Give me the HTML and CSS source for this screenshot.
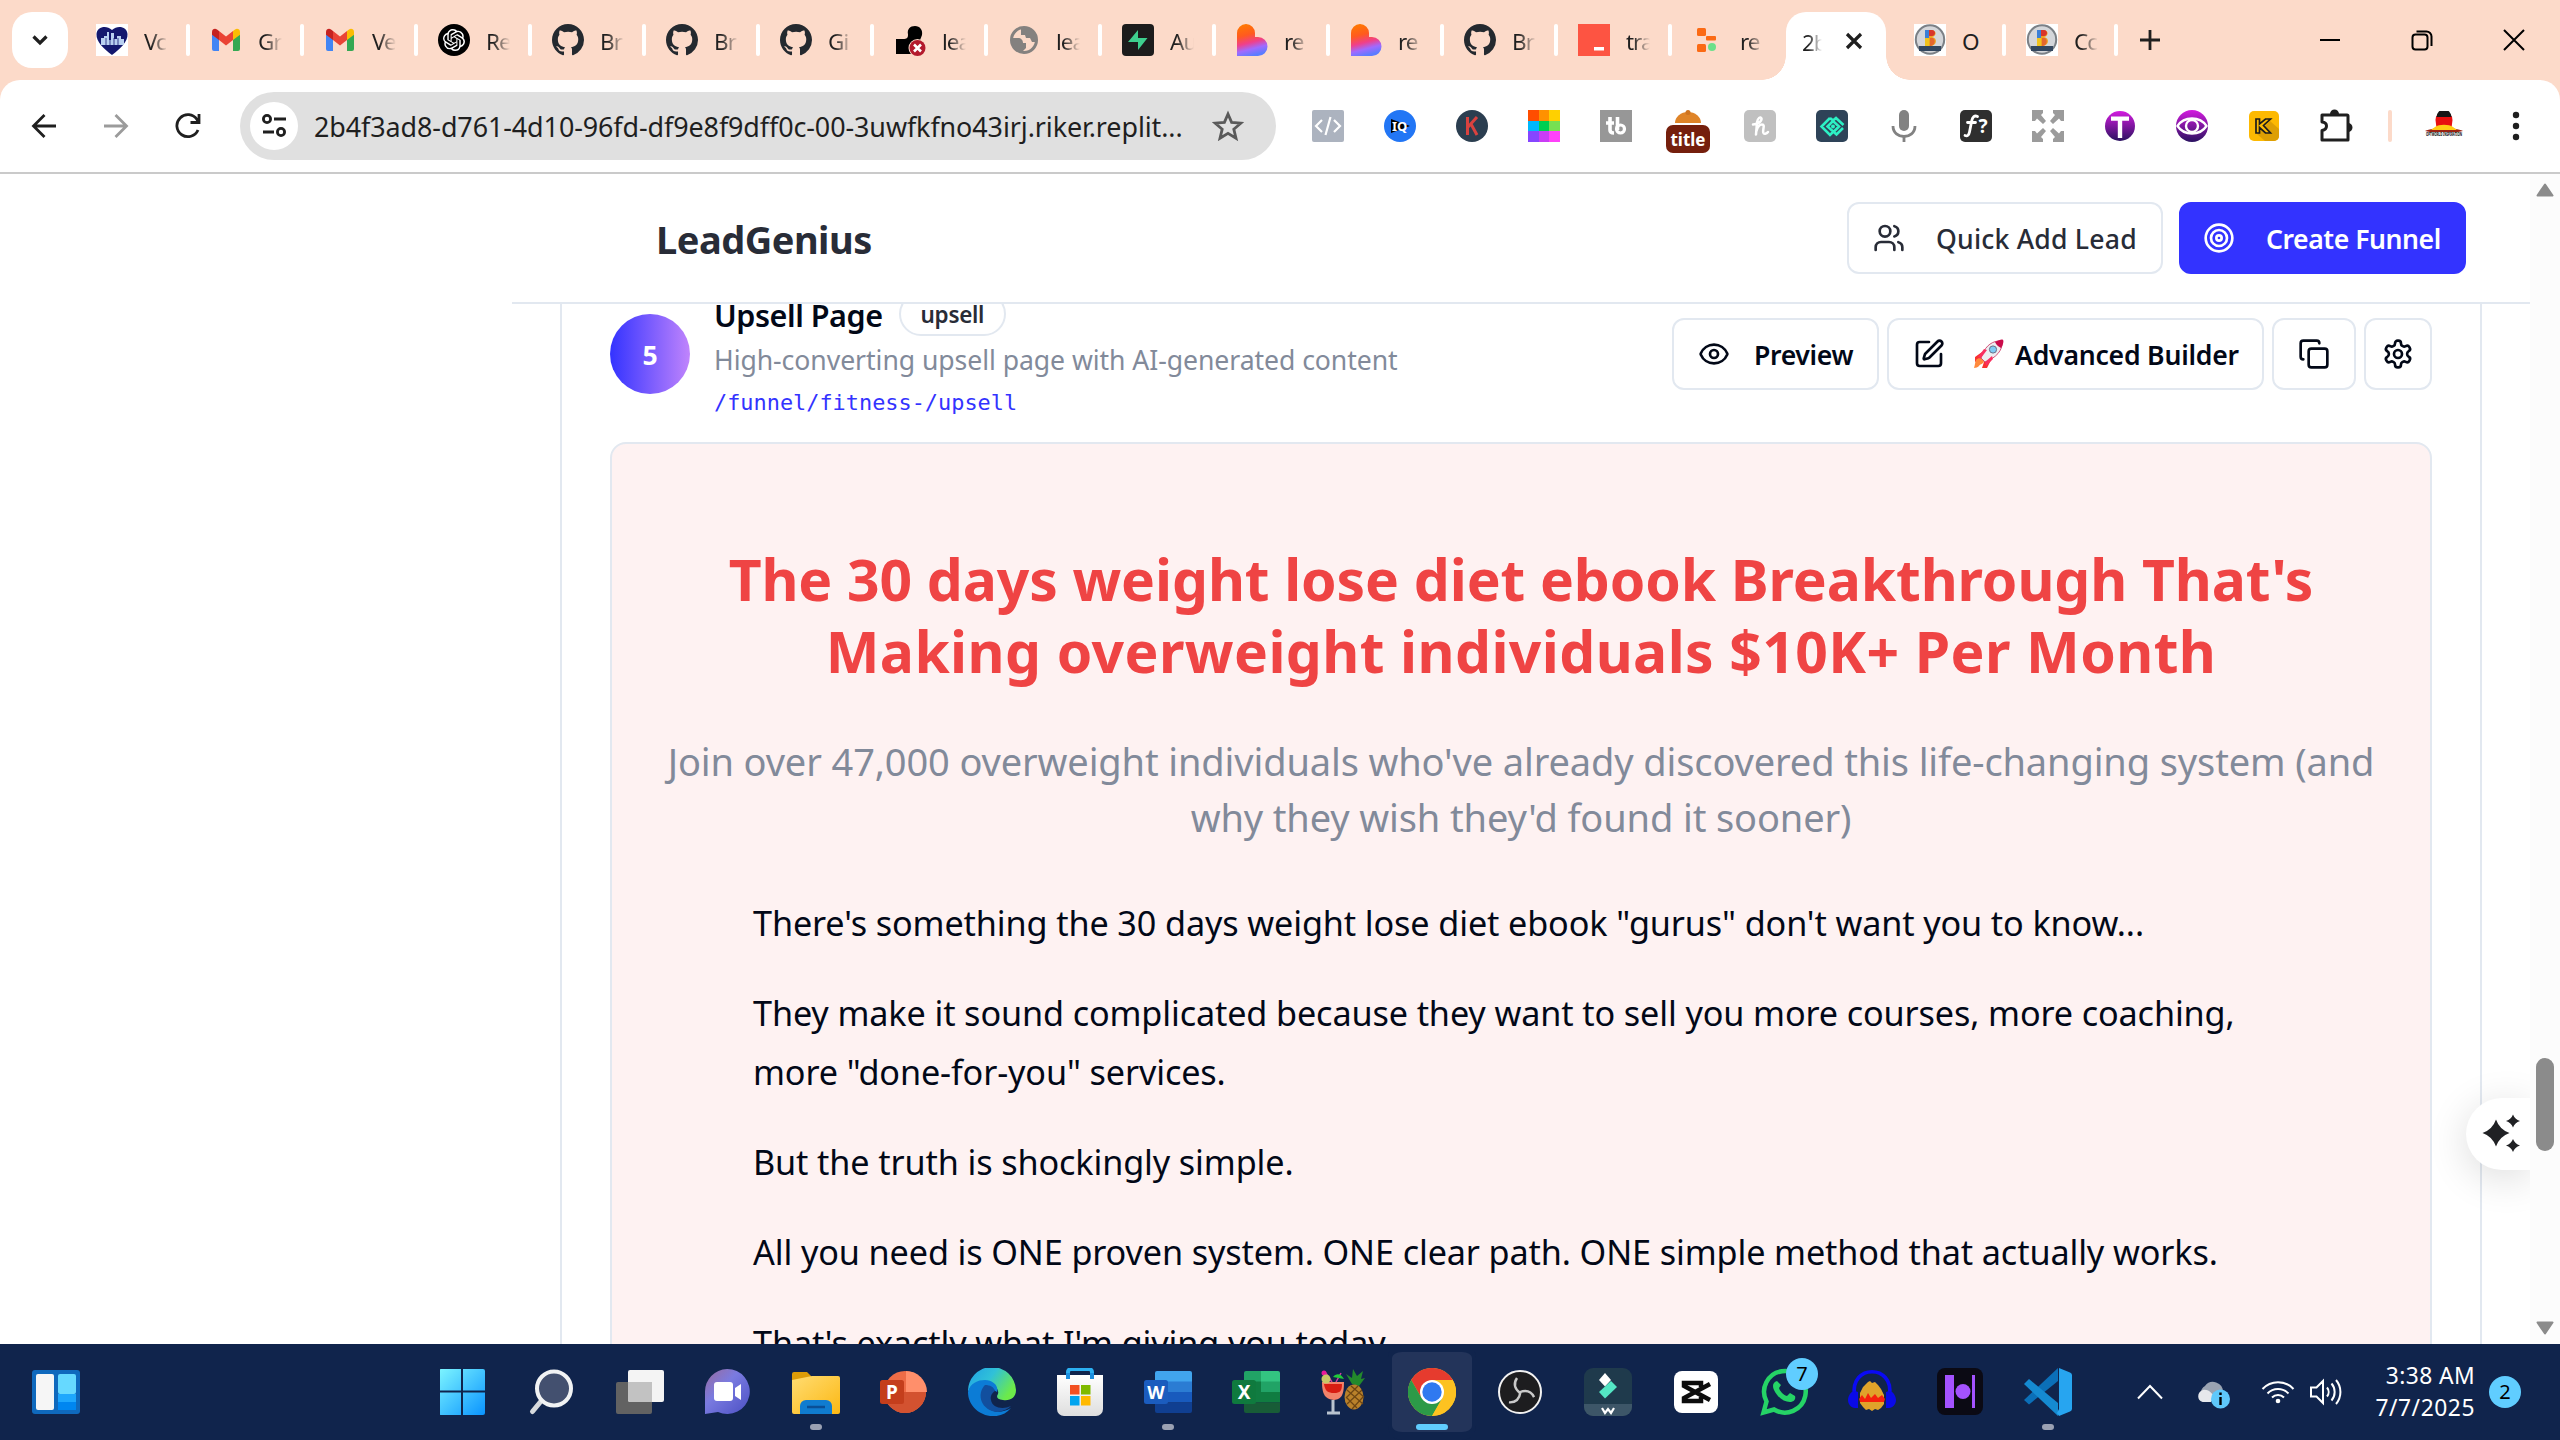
FILE: index.html
```html
<!DOCTYPE html>
<html lang="en">
<head>
<meta charset="utf-8">
<title>LeadGenius</title>
<link rel="stylesheet" href="styles.css">
</head>
<body>
<svg class="defs" aria-hidden="true">
  <defs>
    <linearGradient id="g-blob" x1="0.2" y1="0" x2="0.45" y2="1"><stop offset="0" stop-color="#ff7a00"/><stop offset=".35" stop-color="#ff5a1f"/><stop offset=".6" stop-color="#f0408a"/><stop offset=".8" stop-color="#a06aff"/><stop offset="1" stop-color="#5b7cff"/></linearGradient>
    <linearGradient id="g-purple" x1="0" y1="0" x2="0" y2="1"><stop offset="0" stop-color="#d41be0"/><stop offset="1" stop-color="#2a1260"/></linearGradient>
    <linearGradient id="g-win" x1="0" y1="0" x2="1" y2="1"><stop offset="0" stop-color="#7df5ff"/><stop offset="1" stop-color="#0a94ff"/></linearGradient>
    <linearGradient id="g-chat" x1="0" y1="0" x2="1" y2="1"><stop offset="0" stop-color="#9a6a9c"/><stop offset=".4" stop-color="#7a7be0"/><stop offset="1" stop-color="#4b4fc4"/></linearGradient>
    <linearGradient id="g-folder" x1="0" y1="0" x2="1" y2="1"><stop offset="0" stop-color="#ffdc72"/><stop offset="1" stop-color="#fcb813"/></linearGradient>
    <linearGradient id="g-edge" x1="0" y1="0" x2="1" y2=".5"><stop offset="0" stop-color="#1fa0e6"/><stop offset=".5" stop-color="#30c1d8"/><stop offset="1" stop-color="#6cea4a"/></linearGradient>
    <linearGradient id="g-bag" x1="0" y1="0" x2="0" y2="1"><stop offset="0" stop-color="#fff"/><stop offset="1" stop-color="#dedede"/></linearGradient>
    <symbol id="github" viewBox="0 0 16 16"><path fill="#24292f" d="M8 0C3.58 0 0 3.58 0 8c0 3.54 2.29 6.53 5.47 7.59.4.07.55-.17.55-.38 0-.19-.01-.82-.01-1.49-2.01.37-2.53-.49-2.69-.94-.09-.23-.48-.94-.82-1.13-.28-.15-.68-.52-.01-.53.63-.01 1.08.58 1.23.82.72 1.21 1.87.87 2.33.66.07-.52.28-.87.51-1.07-1.78-.2-3.64-.89-3.64-3.95 0-.87.31-1.59.82-2.15-.08-.2-.36-1.02.08-2.12 0 0 .67-.21 2.2.82.64-.18 1.32-.27 2-.27s1.36.09 2 .27c1.53-1.04 2.2-.82 2.2-.82.44 1.1.16 1.92.08 2.12.51.56.82 1.27.82 2.15 0 3.07-1.87 3.75-3.65 3.95.29.25.54.73.54 1.48 0 1.07-.01 1.93-.01 2.2 0 .21.15.46.55.38A8.01 8.01 0 0 0 16 8c0-4.42-3.58-8-8-8z"/></symbol>
    <symbol id="gmail" viewBox="0 0 32 32"><path fill="#4285f4" d="M2 10l7 5v12H4a2 2 0 0 1-2-2z"/><path fill="#34a853" d="M30 10l-7 5v12h5a2 2 0 0 0 2-2z"/><path fill="#ea4335" d="M9 7l7 5.5L23 7v9l-7 5.500L9 16z"/><path fill="#c5221f" d="M2 8c0-3 3-4 5-2.500l2 1.500v9l-7-5.200z"/><path fill="#fbbc04" d="M30 8c0-3-3-4-5-2.500L23 7v9l7-5.200z"/></symbol>
    <symbol id="blob" viewBox="0 0 32 32"><path fill="url(#g-blob)" d="M1 32V9a9 9 0 0 1 18 0v4h3a9.500 9.500 0 0 1 0 19z"/></symbol>
    <symbol id="badge" viewBox="0 0 32 32"><path fill="#fff" d="M0 0h32v32H0z"/><circle cx="16" cy="15.500" r="14.200" fill="#d4d6da" stroke="#7b8086" stroke-width="2"/><path d="M11 6h6c6 0 6 6 1 7 6 1 5 9-2 9h-5z" fill="#f0a11e"/><path d="M11 6h4v8h-4z" fill="#3b7fd6"/><path d="M15 6h3c4 0 4 6 0 6h-3z" fill="#d8352a"/><path d="M11 14h4v8h-4z" fill="#f0c31e"/><path d="M16 14h3c3 2 2 8-3 8z" fill="#e4672e"/><path fill="#33475f" d="M5 22h22v5H5z"/></symbol>
    <symbol id="heart" viewBox="0 0 32 32"><path fill="#fff" d="M0 0h32v32H0z"/><path fill="#14186e" d="M16 31C8 25 0 18 .500 10 1 3 10 .500 16 6c6-5.500 15-3 15.500 4C32 18 24 25 16 31z"/><path fill="#b9d0f0" d="M5 21V14h3v-2h3V8h2v8h2V9h3v6h3v-3h4v3h3v6z"/><path d="M10 14v7M14 14v7M18 14v7M22 14v7" stroke="#14186e" stroke-width=".800"/></symbol>
  </defs>
</svg>

<div class="tabstrip">
  <div class="tab-search"><svg width="20" height="20" viewBox="0 0 20 20"><path d="M3.500 6.500L10 13l6.500-6.500" fill="none" stroke="#1f1f1f" stroke-width="3.200"/></svg></div>
  <div class="tabs">
    <div class="tab"><svg class="fav"><use href="#heart"/></svg><span class="tab-text">Vc</span></div>
    <div class="tab"><svg class="fav"><use href="#gmail"/></svg><span class="tab-text">Gr</span></div>
    <div class="tab"><svg class="fav"><use href="#gmail"/></svg><span class="tab-text">Ve</span></div>
    <div class="tab"><svg class="fav" viewBox="0 0 32 32"><circle cx="16" cy="16" r="16"/><path fill="#fff" transform="translate(5 5) scale(.917)" d="M22.2819 9.8211a5.9847 5.9847 0 0 0-.5157-4.9108 6.0462 6.0462 0 0 0-6.5098-2.9A6.0651 6.0651 0 0 0 4.9807 4.1818a5.9847 5.9847 0 0 0-3.9977 2.9 6.0462 6.0462 0 0 0 .7427 7.0966 5.98 5.98 0 0 0 .511 4.9107 6.051 6.051 0 0 0 6.5146 2.9001A5.9847 5.9847 0 0 0 13.2599 24a6.0557 6.0557 0 0 0 5.7718-4.2058 5.9894 5.9894 0 0 0 3.9977-2.9001 6.0557 6.0557 0 0 0-.7475-7.0729zm-9.022 12.6081a4.4755 4.4755 0 0 1-2.8764-1.0408l.1419-.0804 4.7783-2.7582a.7948.7948 0 0 0 .3927-.6813v-6.7369l2.02 1.1686a.071.071 0 0 1 .038.052v5.5826a4.504 4.504 0 0 1-4.4945 4.4944zm-9.6607-4.1254a4.4708 4.4708 0 0 1-.5346-3.0137l.142.0852 4.783 2.7582a.7712.7712 0 0 0 .7806 0l5.8428-3.3685v2.3324a.0804.0804 0 0 1-.0332.0615L9.74 19.9502a4.4992 4.4992 0 0 1-6.1408-1.6464zM2.3408 7.8956a4.485 4.485 0 0 1 2.3655-1.9728V11.6a.7664.7664 0 0 0 .3879.6765l5.8144 3.3543-2.0201 1.1685a.0757.0757 0 0 1-.071 0l-4.8303-2.7865A4.504 4.504 0 0 1 2.3408 7.872zm16.5963 3.8558L13.1038 8.364 15.1192 7.2a.0757.0757 0 0 1 .071 0l4.8303 2.7913a4.4944 4.4944 0 0 1-.6765 8.1042v-5.6772a.79.79 0 0 0-.407-.667zm2.0107-3.0231l-.142-.0852-4.7735-2.7818a.7759.7759 0 0 0-.7854 0L9.409 9.2297V6.8974a.0662.0662 0 0 1 .0284-.0615l4.8303-2.7866a4.4992 4.4992 0 0 1 6.6802 4.66zM8.3065 12.863l-2.02-1.1638a.0804.0804 0 0 1-.038-.0567V6.0742a4.4992 4.4992 0 0 1 7.3757-3.4537l-.142.0805L8.704 5.459a.7948.7948 0 0 0-.3927.6813zm1.0976-2.3654l2.602-1.4998 2.6069 1.4998v2.9994l-2.5974 1.4997-2.6067-1.4997Z"/></svg><span class="tab-text">Re</span></div>
    <div class="tab"><svg class="fav"><use href="#github"/></svg><span class="tab-text">Br</span></div>
    <div class="tab"><svg class="fav"><use href="#github"/></svg><span class="tab-text">Br</span></div>
    <div class="tab"><svg class="fav"><use href="#github"/></svg><span class="tab-text">Gi</span></div>
    <div class="tab"><svg class="fav" viewBox="0 0 32 32"><path d="M2 30V15h7c4 0 5-1 5-4.500C13 5 16 2 21 2s8 4 7 9c-1 3-2 4-2 7v12z"/><circle cx="23.500" cy="24" r="9" fill="#fcdac9"/><circle cx="23.500" cy="24" r="8" fill="#b3192c"/><path d="M20 20.500l7 7m0-7l-7 7" stroke="#fff" stroke-width="2.600"/></svg><span class="tab-text">lea</span></div>
    <div class="tab"><svg class="fav" viewBox="0 0 32 32"><circle cx="16" cy="16" r="12.500" fill="none" stroke="#84817f" stroke-width="3"/><path fill="#84817f" d="M4 14h6c3 0 5 2 5 5h3v5l-4 4c-6 0-10-6-10-14zM13 4h8l6 5v9h-3l-2-4h-4l-1-3h-4V7z"/></svg><span class="tab-text">lea</span></div>
    <div class="tab"><svg class="fav" viewBox="0 0 32 32"><rect width="32" height="32" rx="4" fill="#1c1c1c"/><path fill="#3ecf8e" d="M16 6v8h9.500L16 26v-8H6z"/></svg><span class="tab-text">Au</span></div>
    <div class="tab"><svg class="fav"><use href="#blob"/></svg><span class="tab-text">re</span></div>
    <div class="tab"><svg class="fav"><use href="#blob"/></svg><span class="tab-text">re</span></div>
    <div class="tab"><svg class="fav"><use href="#github"/></svg><span class="tab-text">Br</span></div>
    <div class="tab"><svg class="fav" viewBox="0 0 32 32"><path fill="#fd5442" d="M0 0h32v32H0z"/><path fill="#fff" d="M16 23h10v3.500H16z"/></svg><span class="tab-text">tra</span></div>
    <div class="tab last"><svg class="fav" viewBox="0 0 32 32"><g fill="#fb6a14"><rect x="5" y="4" width="9" height="8" rx="1.500"/><rect x="14" y="12" width="10" height="4.500" rx="1"/><rect x="5" y="20" width="9" height="8" rx="1.500"/></g><circle cx="20" cy="23" r="4" fill="#6be08a"/></svg><span class="tab-text">re</span></div>
    <div class="tab active"><span class="tab-text">2b</span><svg class="close" width="18" height="18" viewBox="0 0 18 18"><path d="M2 2l14 14M16 2L2 16" stroke="#1f1f1f" stroke-width="3.200"/></svg></div>
    <div class="tab after"><svg class="fav"><use href="#badge"/></svg><span class="tab-text">O</span></div>
    <div class="tab end"><svg class="fav"><use href="#badge"/></svg><span class="tab-text">Cc</span></div>
  </div>
  <svg class="plus" width="20" height="20" viewBox="0 0 20 20"><path d="M10 0v20M0 10h20" stroke="#1f1f1f" stroke-width="2.800"/></svg>
  <div class="win-controls">
    <svg width="24" height="24" viewBox="0 0 24 24"><path d="M2 12h20" stroke="#000" stroke-width="2"/></svg>
    <svg width="24" height="24" viewBox="0 0 24 24" fill="none" stroke="#000" stroke-width="2"><rect x="2.500" y="6.500" width="15" height="15" rx="3"/><path d="M6.500 3.500h10a5 5 0 0 1 5 5V18"/></svg>
    <svg width="24" height="24" viewBox="0 0 24 24"><path d="M2 2l20 20M22 2L2 22" stroke="#000" stroke-width="2"/></svg>
  </div>
</div>

<div class="toolbar">
  <div class="cell"><svg width="26" height="26" viewBox="0 0 26 26" fill="none" stroke="#1f1f1f" stroke-width="2.800"><path d="M25 13H3M13.500 2L2.500 13l11 11"/></svg></div>
  <div class="cell"><svg width="26" height="26" viewBox="0 0 26 26" fill="none" stroke="#9b9b9b" stroke-width="2.800"><path d="M1 13h22M12.500 2l11 11-11 11"/></svg></div>
  <div class="cell"><svg width="26" height="26" viewBox="0 0 26 26" fill="none" stroke="#1f1f1f" stroke-width="2.800"><path d="M23 17A11 11 0 1 1 22 6.500l1.500 2.500M24 1v8.500h-8.500"/></svg></div>
  <div class="address">
    <div class="site"><svg width="26" height="26" viewBox="0 0 26 26" fill="none" stroke="#1f1f1f" stroke-width="2.800"><circle cx="6" cy="6" r="3.600"/><path d="M13 6h12M2 19h11"/><circle cx="20" cy="19" r="3.600"/></svg></div>
    <span class="url">2b4f3ad8-d761-4d10-96fd-df9e8f9dff0c-00-3uwfkfno43irj.riker.replit...</span>
    <svg class="star" width="32" height="32" viewBox="0 0 32 32"><path d="M16 4l3.600 8.400 9.200.8-7 6 2.200 9L16 23.400 8 28.200l2.200-9-7-6 9.200-.8z" fill="none" stroke="#5a5a5a" stroke-width="2.800"/></svg>
  </div>
  <div class="exts">
    <div class="cell"><svg width="32" height="32" viewBox="0 0 32 32"><rect width="32" height="32" rx="2" fill="#acb3bf"/><path d="M10 10l-6 6 6 6M22 10l6 6-6 6M18.500 7l-5 18" fill="none" stroke="#fff" stroke-width="2.200"/></svg></div>
    <div class="cell"><svg width="32" height="32" viewBox="0 0 32 32"><circle cx="16" cy="16" r="16" fill="#2276f5"/><path d="M7 9l19 7-19 7z"/><text x="8" y="21" font-size="13" class="ico-text" fill="#fff">IQ</text></svg></div>
    <div class="cell"><svg width="32" height="32" viewBox="0 0 32 32"><circle cx="16" cy="16" r="16" fill="#2b3e50"/><path d="M11.500 7v18M21 7l-9 10M15 14l6 11" fill="none" stroke="#d9423f" stroke-width="3"/></svg></div>
    <div class="cell"><div class="swatches"><i></i><i></i><i></i><i></i><i></i><i></i><i></i><i></i><i></i></div></div>
    <div class="cell"><svg width="32" height="32" viewBox="0 0 32 32"><path fill="#979797" d="M0 0h32v32H0z"/><path d="M10 7v13q0 3 4 3M6 13h8M17.500 7v13" fill="none" stroke="#fff" stroke-width="3.600"/><circle cx="20.500" cy="19" r="4" fill="none" stroke="#fff" stroke-width="3.200"/></svg></div>
    <div class="cell title-ext"><svg width="44" height="44" viewBox="0 0 44 44"><path d="M9 13a13 11 0 0 1 26 0z" fill="#df8428"/><circle cx="22" cy="2.500" r="2.500" fill="#cf7420"/><rect y="15" width="44" height="28" rx="7" fill="#751f0d"/><text x="22" y="35.500" text-anchor="middle" font-size="17" textLength="35" lengthAdjust="spacingAndGlyphs" class="ico-text" fill="#fff">title</text></svg></div>
    <div class="cell"><svg width="32" height="32" viewBox="0 0 32 32"><rect width="32" height="32" rx="5" fill="#c0c0c0"/><path d="M9 14.500c4 0 9-3 8.500-6-.800-2.500-4-.500-4.500 4l-1 12M12.500 21c1-4 3-6.500 5.500-6.500 3.500 0 .500 5 1.200 8 .6 2 3.300 1.500 4.800-.5" fill="none" stroke="#fff" stroke-width="2.500" stroke-linecap="round"/></svg></div>
    <div class="cell"><svg width="32" height="32" viewBox="0 0 32 32"><rect width="32" height="32" rx="5" fill="#2e4358"/><path d="M14 8l-8.500 8.500L14 25l3-3M14 8l3 2.500 3-2.500 7.500 7M27 18l-6.500 6.500-9-8 5.500-5.500 6 5.500-5.500 5.500" fill="none" stroke="#2df0c4" stroke-width="2.600"/><circle cx="17" cy="16.500" r="2" fill="#2df0c4"/></svg></div>
    <div class="cell"><svg width="26" height="32" viewBox="0 0 26 32"><rect x="8" width="10" height="21" rx="5" fill="#828282"/><path d="M2 16c0 14 22 14 22 0M13 26v6" fill="none" stroke="#828282" stroke-width="2.800"/></svg></div>
    <div class="cell"><svg width="32" height="32" viewBox="0 0 32 32"><rect width="32" height="32" rx="5" fill="#2f2f2f"/><path d="M17.500 6.500c-3-1.500-5 .500-5.700 4L9.500 22c-.600 3-2 4.500-4.500 3.500M7.500 12.500h8" fill="none" stroke="#fff" stroke-width="2.800" stroke-linecap="round"/><text x="18.500" y="23" font-size="19" class="ico-text" fill="#fff">?</text></svg></div>
    <div class="cell"><svg width="32" height="32" viewBox="0 0 32 32" fill="#9b9b9b"><path d="M0 0h11v3L9 5l5 6-3 3-6-5.500L3 11H0zM32 0H21v3l2 2-5 6 3 3 6-5.500 2 2.500h3zM0 32h11v-3l-2-2 5-6-3-3-6 5.500L3 21H0zM32 32H21v-3l2-2-5-6 3-3 6 5.500 2-2.500h3z"/></svg></div>
    <div class="cell"><svg width="30" height="30" viewBox="0 0 30 30"><circle cx="15" cy="15" r="15" fill="url(#g-purple)"/><path d="M6 5.500h18v4.200h-6.800V27h-4.400V9.700H6z" fill="#fff"/></svg></div>
    <div class="cell"><svg width="32" height="32" viewBox="0 0 32 32"><circle cx="16" cy="16" r="16" fill="url(#g-purple)"/><path d="M1.500 16C8 6 24 6 30.500 16 24 26 8 26 1.500 16z" fill="none" stroke="#fff" stroke-width="2.300"/><circle cx="16" cy="16" r="6" fill="none" stroke="#fff" stroke-width="2.400"/></svg></div>
    <div class="cell"><svg width="30" height="30" viewBox="0 0 30 30"><rect width="30" height="30" rx="5" fill="#fdb902"/><path d="M21 10l9 8v7a5 5 0 0 1-5 5h-9l-8-7z" fill="#dd9f04"/><path d="M7 8h3.500v5l6-5h5l-7 6.500 7 7.500h-5l-6-5.500V22H7z" fill="#fdb902" stroke="#1c1c1c" stroke-width="1.700"/></svg></div>
    <div class="cell"><svg width="34" height="34" viewBox="0 0 34 34"><path d="M3 6h25a1 1 0 0 1 1 1v24H3v-9.500c6-1 6-8 0-8.500z" fill="none" stroke="#1f1f1f" stroke-width="3" stroke-linejoin="round"/><path d="M11 5a4.500 4.500 0 0 1 9 0zM29 14a4.500 4.500 0 0 1 0 9z" fill="#1f1f1f"/></svg></div>
  </div>
  <span class="tool-sep"></span>
  <div class="cell avatar"><svg width="40" height="30" viewBox="0 0 40 30"><path d="M12 9a8 8 0 0 1 16 0z" fill="#161616"/><path d="M11.500 9a8.500 8.500 0 0 1 17 0l-1 8h-15z" fill="#e80f0f"/><path d="M12.500 6a7.500 7.500 0 0 1 15 0z" fill="#161616"/><path d="M1 20c8-4 30-4 38 0l-5 1H6z" fill="#9c2212"/><path d="M11 16c4-3 14-3 18 0l4 3H7z" fill="#ffcc14"/><text x="20" y="25" text-anchor="middle" font-size="5" textLength="36" lengthAdjust="spacingAndGlyphs" class="ico-text">OPTWORLD INSPIRATION</text></svg></div>
  <div class="cell"><svg width="8" height="30" viewBox="0 0 8 30" fill="#1f1f1f"><circle cx="4" cy="4" r="3.200"/><circle cx="4" cy="15" r="3.200"/><circle cx="4" cy="26" r="3.200"/></svg></div>
</div>

<div class="viewport">
  <aside class="sidebar"></aside>
  <div class="page">
    <header class="app-header">
      <span class="brand">LeadGenius</span>
      <div class="header-actions">
        <div class="btn quick"><svg class="ic" viewBox="0 0 24 24"><path d="M16 21v-2a4 4 0 0 0-4-4H6a4 4 0 0 0-4 4v2"/><circle cx="9" cy="7" r="4"/><path d="M22 21v-2a4 4 0 0 0-3-3.870M16 3.130a4 4 0 0 1 0 7.750"/></svg><span class="label">Quick Add Lead</span></div>
        <div class="btn create"><svg class="ic" viewBox="0 0 24 24"><circle cx="12" cy="12" r="10"/><circle cx="12" cy="12" r="6"/><circle cx="12" cy="12" r="2"/></svg><span class="label">Create Funnel</span></div>
      </div>
    </header>
    <main class="content">
      <section class="card">
        <div class="step">
          <div class="num"><span class="label">5</span></div>
          <div class="info">
            <div class="title-row"><span class="step-title">Upsell Page</span><span class="pill">upsell</span></div>
            <div class="desc">High-converting upsell page with AI-generated content</div>
            <div class="path">/funnel/fitness-/upsell</div>
          </div>
          <div class="actions">
            <div class="btn preview"><svg class="ic" viewBox="0 0 24 24"><path d="M2.060 12.350a1 1 0 0 1 0-.700 10.750 10.750 0 0 1 19.880 0 1 1 0 0 1 0 .700 10.750 10.750 0 0 1-19.880 0"/><circle cx="12" cy="12" r="3"/></svg><span class="label">Preview</span></div>
            <div class="btn advanced"><svg class="ic" viewBox="0 0 24 24"><path d="M12 3H5a2 2 0 0 0-2 2v14a2 2 0 0 0 2 2h14a2 2 0 0 0 2-2v-7"/><path d="M18.380 2.620a1 1 0 0 1 3 3l-9.010 9.010a2 2 0 0 1-.850.510l-2.870.840a.500.500 0 0 1-.620-.620l.840-2.870a2 2 0 0 1 .510-.850z"/></svg>
              <svg class="rocket" width="30" height="30" viewBox="0 0 30 30"><path d="M8 13L1 18v5l6-3zM17 21l-4 8h-5l2-6z" fill="#f8312f"/><path d="M2 21c2-3 7-2 8 1 0 3-4 3-5 5-1 1-3 2-5 2 1-3 1-6 2-8z" fill="#ff8a3d"/><path d="M7 19C10 9 16 3 24 2c3 0 4 0 4 1 1 8-6 16-17 20z" fill="#ededf0" stroke="#ca2a5a" stroke-width=".800"/><path d="M21 3c4-2 7-3 8-2s0 5-2 8c-2-1-5-3-6-6z" fill="#ca0b4a"/><circle cx="19" cy="10.500" r="3.600" fill="#7ecbf5" stroke="#6a6f86" stroke-width="1"/><path d="M7 19l-3-1 6-8 3 1zM11 23l1 4 7-7-1-3z" fill="#f92f60"/></svg><span class="label">Advanced Builder</span></div>
            <div class="btn copy"><svg class="ic" viewBox="0 0 24 24"><rect x="8" y="8" width="14" height="14" rx="2"/><path d="M4 16c-1.100 0-2-.900-2-2V4c0-1.100.900-2 2-2h10c1.100 0 2 .900 2 2"/></svg></div>
            <div class="btn gear"><svg class="ic" viewBox="0 0 24 24"><path d="M12.220 2h-.440a2 2 0 0 0-2 2v.180a2 2 0 0 1-1 1.730l-.430.250a2 2 0 0 1-2 0l-.150-.080a2 2 0 0 0-2.730.730l-.220.380a2 2 0 0 0 .730 2.730l.150.100a2 2 0 0 1 1 1.720v.510a2 2 0 0 1-1 1.740l-.150.090a2 2 0 0 0-.730 2.730l.220.380a2 2 0 0 0 2.730.730l.150-.080a2 2 0 0 1 2 0l.430.250a2 2 0 0 1 1 1.730V20a2 2 0 0 0 2 2h.440a2 2 0 0 0 2-2v-.180a2 2 0 0 1 1-1.730l.430-.250a2 2 0 0 1 2 0l.150.080a2 2 0 0 0 2.730-.730l.220-.390a2 2 0 0 0-.730-2.730l-.150-.080a2 2 0 0 1-1-1.740v-.500a2 2 0 0 1 1-1.740l.150-.090a2 2 0 0 0 .730-2.730l-.220-.380a2 2 0 0 0-2.730-.730l-.150.080a2 2 0 0 1-2 0l-.430-.250a2 2 0 0 1-1-1.730V4a2 2 0 0 0-2-2z"/><circle cx="12" cy="12" r="3"/></svg></div>
          </div>
        </div>
        <article class="panel">
          <h1 class="headline">The 30 days weight lose diet ebook Breakthrough That's<br><span class="second">Making overweight individuals $10K+ Per Month</span></h1>
          <p class="sub">Join over 47,000 overweight individuals who've already discovered this life-changing system (and<br>why they wish they'd found it sooner)</p>
          <div class="copytext">
            <p>There's something the 30 days weight lose diet ebook "gurus" don't want you to know...</p>
            <p>They make it sound complicated because they want to sell you more courses, more coaching,<br>more "done-for-you" services.</p>
            <p>But the truth is shockingly simple.</p>
            <p>All you need is ONE proven system. ONE clear path. ONE simple method that actually works.</p>
            <p>That's exactly what I'm giving you today.</p>
          </div>
        </article>
      </section>
    </main>
    <div class="ai-fab"><svg width="40" height="40" viewBox="0 0 40 40" fill="#202124"><path d="M14 5.500q3.500 10 13.500 13.500-10 3.500-13.500 13.500Q10.500 22.500.500 19q10-3.500 13.500-13.500zM31 .500q1.800 4.800 7 6.500-5.200 1.700-7 6.500-1.800-4.800-7-6.500 5.200-1.700 7-6.500zM31 25q1.800 4.800 7 6.500-5.200 1.700-7 6.500-1.800-4.800-7-6.500 5.200-1.700 7-6.500z"/></svg></div>
  </div>
  <div class="scrollbar">
    <svg width="18" height="14" viewBox="0 0 18 14"><path d="M9 1.500L16.500 12.500h-15z" fill="#8b8b8b" stroke="#8b8b8b" stroke-width="2" stroke-linejoin="round"/></svg>
    <span class="thumb"></span>
    <svg width="18" height="14" viewBox="0 0 18 14"><path d="M9 12.500L16.500 1.500h-15z" fill="#8b8b8b" stroke="#8b8b8b" stroke-width="2" stroke-linejoin="round"/></svg>
  </div>
</div>

<div class="taskbar">
  <div class="widgets"><svg width="48" height="44" viewBox="0 0 48 44"><rect width="48" height="44" rx="3" fill="#0f69bd"/><rect x="4" y="4" width="18" height="36" rx="2" fill="#f6f6f6"/><rect x="26" y="4" width="18" height="20" rx="2" fill="#66d9ff"/><path fill="#1ea7fd" d="M26 24h18v8H26z"/><path fill="#0086f0" d="M26 32h18v8H26z"/></svg></div>
  <div class="apps">
    <div class="app"><svg viewBox="0 0 48 48"><path fill="url(#g-win)" d="M1 3a2 2 0 0 1 2-2h20v21.500H1zM25 1h20a2 2 0 0 1 2 2v19.500H25zM1 24.500h22V47H3a2 2 0 0 1-2-2zM25 24.500h22V45a2 2 0 0 1-2 2H25z" transform="translate(-2 0)"/></svg></div>
    <div class="app"><svg viewBox="0 0 48 48"><path d="M14 32L4.500 43.500" stroke="#d7dadd" stroke-width="5" stroke-linecap="round"/><circle cx="26" cy="20.500" r="17" fill="#43506f" stroke="#f1f3f4" stroke-width="4"/></svg></div>
    <div class="app"><svg viewBox="0 0 48 48"><rect x="0" y="14" width="36" height="32" rx="2" fill="#626262"/><rect x="12" y="2" width="36" height="32" rx="2" fill="#f4f4f4"/><path fill="#c2c2c2" d="M12 14h24v20H14a2 2 0 0 1-2-2z"/></svg></div>
    <div class="app"><svg viewBox="0 0 48 48"><path d="M23 1a22.500 22.500 0 1 1-9 43L1 46V24A22.500 22.500 0 0 1 23 1z" fill="url(#g-chat)"/><rect x="10" y="14" width="19" height="19" rx="3" fill="#fff"/><path d="M31 20l6-4v16l-6-4z" fill="#fff"/></svg></div>
    <div class="app"><svg viewBox="0 0 48 48"><path d="M0 6a2 2 0 0 1 2-2h13l4 4v8H0z" fill="#dc9c08"/><path d="M0 12l20-4h26a2 2 0 0 1 2 2v34a2 2 0 0 1-2 2H2a2 2 0 0 1-2-2z" fill="url(#g-folder)"/><path d="M8 46V38a6 6 0 0 1 6-6h20a6 6 0 0 1 6 6v8z" fill="#107cd0"/><path d="M15 39h18" stroke="#0a4f96" stroke-width="2.500"/></svg><b class="dot"></b></div>
    <div class="app"><svg viewBox="0 0 48 48"><circle cx="25" cy="24" r="21" fill="#ed6c47"/><path d="M26 3a21 21 0 0 1 21 21H26z" fill="#ff8f6b"/><path d="M4 24h42a21 21 0 0 1-42 0z" fill="#d35230"/><rect y="12" width="24" height="24" rx="2.500" fill="#c43e1c"/><text x="12" y="31" text-anchor="middle" font-size="19" class="ico-text" fill="#fff">P</text></svg></div>
    <div class="app"><svg viewBox="0 0 48 48"><path d="M0 24A24 24 0 0 1 48 22c0 8-6 11-13 10-6-1-7-3-5-6 2-7-9-14-18-12C6 15 2 19 0 24z" fill="url(#g-edge)"/><path d="M0 24c2-9 10-12 17-12 8 0 14 6 12 12-7-6-17 2-12 12 5 9 16 10 26 4C38 46 31 49 22 48 9 46 0 36 0 24z" fill="#0c7cd6"/><path d="M17 17c-9 9-4 26 13 27 6-1 10-3 13-6-8 4-19 2-20-6-1-4 1-7 4-9-1-4-5-6-10-6z" fill="#124f9e"/></svg></div>
    <div class="app"><svg viewBox="0 0 48 48"><path d="M12 10V4a3 3 0 0 1 3-3h18a3 3 0 0 1 3 3v6" fill="none" stroke="#2bb0f2" stroke-width="4"/><path d="M1 7h46v34a7 7 0 0 1-7 7H8a7 7 0 0 1-7-7z" fill="url(#g-bag)"/><path d="M12 5v6M36 5v6" stroke="#1a8fe0" stroke-width="4"/><path fill="#f25022" d="M14 17h9.500v9.500H14z"/><path fill="#7fba00" d="M25 17h9.500v9.500H25z"/><path fill="#00a4ef" d="M14 28h9.500v9.500H14z"/><path fill="#ffb900" d="M25 28h9.500v9.500H25z"/></svg></div>
    <div class="app"><svg viewBox="0 0 48 48"><path fill="#41a5ee" d="M11 5a2 2 0 0 1 2-2h33a2 2 0 0 1 2 2v9H11z"/><path fill="#2b7cd3" d="M11 13.500h37V24H11z"/><path fill="#185abd" d="M11 24h37v10.500H11z"/><path fill="#103f91" d="M11 34.500h37V43a2 2 0 0 1-2 2H13a2 2 0 0 1-2-2z"/><rect y="12" width="24" height="24" rx="2.500" fill="#1b5cbe"/><text x="12" y="31" text-anchor="middle" font-size="18" class="ico-text" fill="#fff">W</text></svg><b class="dot"></b></div>
    <div class="app"><svg viewBox="0 0 48 48"><path fill="#21a366" d="M12 5a2 2 0 0 1 2-2h15v11H12z"/><path fill="#33c481" d="M29 3h17a2 2 0 0 1 2 2v9H29z"/><path fill="#107c41" d="M12 13.500h17v21H12zM29 24h19v10.500H29z"/><path fill="#21a366" d="M29 13.500h19V24H29z"/><path fill="#185c37" d="M12 34.500h36V43a2 2 0 0 1-2 2H14a2 2 0 0 1-2-2z"/><rect y="12" width="24" height="24" rx="2.500" fill="#0f7a3e"/><text x="12" y="31" text-anchor="middle" font-size="19" class="ico-text" fill="#fff">X</text></svg></div>
    <div class="app"><svg viewBox="0 0 48 48"><path d="M32 16L26 6l6 4 1-9 4 7 6-5-2 8 4-1-6 8z" fill="#238a2c"/><ellipse cx="34" cy="29" rx="9.500" ry="12.500" fill="#b9812a"/><path d="M27 22l16 14M26 29l11 11M31 18l13 11M42 22L27 36M43 29L32 41M38 18L26 30" stroke="#6d4513" stroke-width="1.200"/><path d="M2 14h22c0 14-3 17-10 18C6 31 2 28 2 14z" fill="#f2836a"/><path d="M4 16h18c0 7-2 9-8 9s-9-2-10-9z" fill="#d81d12"/><path d="M13 32v12M7 45h13" stroke="#b9c3cf" stroke-width="3"/><path d="M12 14L5 4M16 14l5-9" stroke="#d03fa0" stroke-width="1.500"/><circle cx="4" cy="5" r="2.500" fill="#e9189a"/><circle cx="6" cy="11" r="4.500" fill="#c7c766"/><path d="M13 9c3-4 8-4 11 2z" fill="#21c93a"/></svg></div>
    <div class="app open"><svg viewBox="0 0 48 48"><circle cx="24" cy="24" r="24" fill="#fdc221"/><path d="M3.200 12A24 24 0 0 1 44.800 12H24L13.600 30z" fill="#e63b2e"/><path d="M3.200 12L13.600 30 24 36l10.400-6L24 48A24 24 0 0 1 3.200 12z" fill="#2c9a48"/><path d="M44.800 12H24l10.400 18L24 48A24 24 0 0 0 44.800 12z" fill="#fdc221"/><circle cx="24" cy="24" r="12" fill="#fff"/><circle cx="24" cy="24" r="9.700" fill="#3079f0"/></svg><b class="bar"></b></div>
    <div class="app"><svg viewBox="0 0 48 48"><circle cx="24" cy="24" r="21" fill="#1d1d1f" stroke="#f2f2f2" stroke-width="2"/><g fill="none" stroke="#c9c9c9" stroke-width="2.400"><path d="M24 25c-5-4-7-9-3-15"/><path d="M24 25c-5-4-7-9-3-15" transform="rotate(120 24 24.500)"/><path d="M24 25c-5-4-7-9-3-15" transform="rotate(240 24 24.500)"/></g></svg></div>
    <div class="app"><svg viewBox="0 0 48 48"><rect width="48" height="48" rx="9" fill="#1f3a4c"/><path d="M0 36h48v3a9 9 0 0 1-9 9H9a9 9 0 0 1-9-9z" fill="#3d5668"/><path d="M21 5l6 7-6 6.500-6-6.500z" fill="#fff"/><path d="M27 13l6 6-12 11.500-6-6.500z" fill="#54e6c4"/><path d="M18 40l3 5 3-4 3 4 3-5" fill="none" stroke="#fff" stroke-width="2.200"/></svg></div>
    <div class="app"><svg viewBox="0 0 48 48"><rect x="2" y="3" width="44" height="42" rx="8" fill="#fff"/><path d="M38 16L12 30v3h17v-4M38 32L12 18v-3h17v4" fill="none" stroke="#0c0c0c" stroke-width="4.500"/></svg></div>
    <div class="app"><svg viewBox="0 0 48 48"><path d="M3.500 44.500l3-11A20.800 20.800 0 1 1 14 41.500z" fill="#10244c" stroke="#25d366" stroke-width="4.500"/><path d="M17 13c-4 1-5 5-3 9 4 8 10 12 16 12 4 0 6-3 5-6l-5-3-3 3c-4-1-7-5-8-8l2-3z" fill="#25d366"/></svg><em class="count">7</em></div>
    <div class="app"><svg viewBox="0 0 48 48"><path d="M6.500 27C2-4 46-4 41.500 27" fill="none" stroke="#0a0af5" stroke-width="3.600"/><path d="M12 25l3-6 3-3 2-2 2-1 2 2 3-1 3 3 3 4 3 6v9l-3 4-3 2-3-1-3 2-3-2-3 1-3-3-3-4z" fill="#e0a32a"/><path d="M11 31l3-4 3 4 3-6 3 5 4-4 3 4 4-3 3 4-1 3H12z" fill="#f6210c"/><path d="M10 24v16H7c-4 0-7-4-7-8s3-9 7-9zM38 24v16h3c4 0 7-4 7-8s-3-9-7-9z" fill="#0a0ae8"/></svg></div>
    <div class="app"><svg viewBox="0 0 48 48"><rect x="1" width="46" height="47" rx="8" fill="#0b0a14"/><path fill="#a452ff" d="M9 7h9v33H9zM36 7h3v33h-3z"/><circle cx="27" cy="23.500" r="7.500" fill="#a452ff"/></svg></div>
    <div class="app"><svg viewBox="0 0 48 48"><path d="M34 0v13L5 36.500 0 32z" fill="#0b6fb8"/><path d="M34 48V35L5 11 0 16z" fill="#158ad1"/><path d="M35 0l11 4.500a3 3 0 0 1 2 3v33a3 3 0 0 1-2 3L35 48l-2-3 2-4z" fill="#27a5f0"/></svg><b class="dot"></b></div>
  </div>
  <div class="tray">
    <svg class="chev" width="28" height="16" viewBox="0 0 28 16"><path d="M2 14.500L14 2l12 12.500" fill="none" stroke="#fff" stroke-width="2"/></svg>
    <svg class="cloud" width="34" height="28" viewBox="0 0 34 28"><path d="M8 19a8 8 0 0 1 0-14 10 10 0 0 1 18 6l-6 9z" fill="#9aa3b2"/><path d="M7 21C0 21-1 11 6 9c7-1 8 4 12 6l-4 6z" fill="#e6e8ec"/><circle cx="23.500" cy="18" r="9.500" fill="#5ec8fb"/><path d="M23.500 16v8M23.500 11.500v2.500" stroke="#000" stroke-width="2.400"/></svg>
    <svg class="wifi" width="34" height="26" viewBox="0 0 34 26" fill="none" stroke="#fff" stroke-width="2"><path d="M1.500 10a21 21 0 0 1 31 0M6.500 14.500a14.500 14.500 0 0 1 21 0M11 18.500a8.500 8.500 0 0 1 12 0"/><circle cx="17" cy="22" r="2.300" fill="#fff" stroke="none"/></svg>
    <svg class="vol" width="34" height="28" viewBox="0 0 34 28" fill="none" stroke="#fff" stroke-width="2"><path d="M2 9.500h5.500L14 3v22l-6.500-6.500H2zM18 9.500a7 7 0 0 1 0 9M22.500 5.500a13 13 0 0 1 0 17M27 2a18.500 18.500 0 0 1 0 24"/></svg>
    <div class="clock"><span class="time">3:38 AM</span><span class="date">7/7/2025</span></div>
    <span class="notif">2</span>
  </div>
</div>
</body>
</html>
```
FILE: styles.css
```css
* { box-sizing: border-box; }
html, body { margin: 0; width: 2560px; height: 1440px; overflow: hidden; }
body {
  display: flex;
  flex-direction: column;
  background: #fcdac9;
  font-family: "Noto Sans", "Open Sans", sans-serif;
  color: #1f1f1f;
}
svg { display: block; flex: none; }
p, h1 { margin: 0; }
.defs { position: absolute; width: 0; height: 0; }
.ico-text { font-family: "Noto Sans", sans-serif; font-weight: 700; }

/* Tab strip */
.tabstrip { height: 80px; flex: none; display: flex; align-items: center; padding-left: 12px; }
.tab-search { width: 56px; height: 56px; border-radius: 20px; background: #fff; display: flex; align-items: center; justify-content: center; margin-right: 8px; }
.tabs { display: flex; align-self: stretch; }
.tab { width: 114px; display: flex; align-items: center; padding-left: 20px; position: relative; }
.tab::after { content: ""; width: 4px; height: 32px; border-radius: 2px; background: #fff; margin-left: 18px; }
.tab.last::after { visibility: hidden; }
.fav { width: 32px; height: 32px; }
.tab-text {
  width: 24px;
  margin-left: 16px;
  overflow: hidden;
  white-space: nowrap;
  font-size: 22.500px;
  line-height: 32px;
  letter-spacing: -1px;
  padding-top: 3px;
  -webkit-mask-image: linear-gradient(90deg, #000 30%, transparent 100%);
  mask-image: linear-gradient(90deg, #000 30%, transparent 100%);
}
.tab.active { width: 100px; height: 68px; align-self: flex-end; background: #fff; border-radius: 20px 20px 0 0; padding: 0 0 10px 16px; }
.tab.active .tab-text { width: 20px; margin-left: 0; }
.tab.active .close { margin-left: 23px; }
.tab.active::before, .tab.active::after {
  content: "";
  position: absolute;
  bottom: 0;
  width: 24px;
  height: 24px;
  margin: 0;
  border-radius: 0;
}
.tab.active::before { left: -24px; background: radial-gradient(circle at 0 0, transparent 23.500px, #fff 24px); }
.tab.active::after { right: -24px; background: radial-gradient(circle at 100% 0, transparent 23.500px, #fff 24px); }
.tab.after { width: 120px; padding-left: 28px; }
.tab.after::after { margin-left: 16px; }
.tab.after .tab-text { -webkit-mask-image: none; mask-image: none; }
.tab.end { width: 112px; }
.tab.end::after { margin-left: 16px; }
.plus { margin-left: 22px; }
.win-controls { margin-left: auto; display: flex; gap: 68px; padding-right: 34px; }

/* Toolbar */
.toolbar { height: 94px; flex: none; display: flex; align-items: center; background: #fff; border-bottom: 2px solid #cacaca; border-radius: 20px 20px 0 0; padding-left: 8px; }
.cell { width: 72px; display: flex; align-items: center; justify-content: center; flex: none; }
.address { margin: 0 16px; width: 1036px; height: 68px; border-radius: 34px; background: #e0e0e0; display: flex; align-items: center; padding-left: 10px; flex: none; }
.site { width: 48px; height: 48px; border-radius: 50%; background: #fff; display: flex; align-items: center; justify-content: center; }
.url { margin-left: 16px; width: 898px; font-size: 26.900px; white-space: nowrap; letter-spacing: -0.080px; }
.exts { display: flex; align-items: center; }
.title-ext svg { margin-top: 12px; }
.swatches { width: 32px; height: 32px; display: grid; grid-template-columns: repeat(3, 1fr); }
.swatches i:nth-child(1) { background: #ff4d00; }
.swatches i:nth-child(2) { background: #ff9100; }
.swatches i:nth-child(3) { background: #ffd000; }
.swatches i:nth-child(4) { background: #00b8fc; }
.swatches i:nth-child(5) { background: #00cf52; }
.swatches i:nth-child(6) { background: #77e052; }
.swatches i:nth-child(7) { background: #8646ff; }
.swatches i:nth-child(8) { background: #c93df5; }
.swatches i:nth-child(9) { background: #ff41fa; }
.tool-sep { width: 4px; height: 32px; border-radius: 2px; background: #fcdac9; margin: 0 16px; }

/* Page */
.viewport { height: 1170px; flex: none; display: grid; grid-template-columns: 512px 2018px 30px; background: #fff; overflow: hidden; }
.page { display: flex; flex-direction: column; min-height: 0; position: relative; overflow: hidden; }
.app-header { height: 130px; flex: none; border-bottom: 2px solid #e2e8f0; display: flex; align-items: center; justify-content: space-between; padding: 0 64px 0 144px; }
.brand { font-size: 38px; font-weight: 700; color: #282c37; white-space: nowrap; letter-spacing: -0.500px; padding-top: 2px; }
.header-actions { display: flex; gap: 16px; }
.btn { height: 72px; border: 2px solid #e2e8f0; border-radius: 12px; background: #fff; display: flex; align-items: center; padding-left: 24px; white-space: nowrap; font-size: 26.600px; font-weight: 600; color: #020817; flex: none; letter-spacing: -0.220px; }
.label { padding-top: 2px; }
.ic { width: 32px; height: 32px; fill: none; stroke: currentColor; stroke-width: 2; stroke-linecap: round; stroke-linejoin: round; }
.quick { width: 316px; gap: 31px; color: #282c37; font-weight: 500; letter-spacing: 0.200px; }
.create { width: 287px; gap: 31px; padding-left: 22px; background: #33f; border-color: #33f; color: #fff; letter-spacing: -0.450px; }

.content { flex: 1; min-height: 0; overflow: hidden; padding: 0 48px; }
.card { margin-top: -64px; height: 1200px; border: 2px solid #e2e8f0; padding: 50px 48px 0; }
.step { height: 124px; display: flex; align-items: center; margin-bottom: 26px; }
.num { width: 80px; height: 80px; border-radius: 50%; background: linear-gradient(90deg, #33f, #c084fc); color: #fff; font-size: 26.600px; font-weight: 700; display: flex; align-items: center; justify-content: center; flex: none; }
.info { margin-left: 24px; height: 124px; white-space: nowrap; }
.title-row { height: 44px; display: flex; align-items: center; gap: 16px; }
.step-title { font-size: 30.500px; font-weight: 600; color: #020817; letter-spacing: -0.450px; padding-top: 2px; }
.pill { height: 44px; border: 2px solid #e2e8f0; border-radius: 22px; padding: 1px 20px 0; font-size: 22.500px; line-height: 40px; font-weight: 600; color: #282c37; letter-spacing: -0.300px; }
.desc { margin-top: 4px; font-size: 26.600px; line-height: 40px; color: #828a9a; letter-spacing: -0.060px; }
.path { margin-top: 7px; font-family: "DejaVu Sans Mono", monospace; font-size: 21.900px; line-height: 32px; color: #33f; }
.actions { margin-left: auto; display: flex; gap: 8px; }
.preview { width: 207px; gap: 24px; letter-spacing: -0.350px; }
.advanced { width: 377px; }
.rocket { margin: 0 11px 0 29px; }
.copy { width: 84px; }
.gear { width: 68px; padding-left: 16px; }

.panel { height: 1100px; border: 2px solid #e2e8f0; border-radius: 16px; background: #fef2f2; padding-top: 99px; white-space: nowrap; }
.headline { font-size: 57px; line-height: 72px; font-weight: 700; color: #ef4444; text-align: center; letter-spacing: -0.100px; }
.second { letter-spacing: 0.400px; }
.sub { margin-top: 46px; font-size: 38px; line-height: 56px; color: #828a9a; text-align: center; letter-spacing: -0.120px; }
.copytext { margin-top: 49px; padding-left: 141px; color: #020817; font-size: 34.200px; line-height: 58.700px; letter-spacing: -0.120px; display: flex; flex-direction: column; gap: 31.500px; }

.ai-fab { position: absolute; right: 0; top: 924px; width: 64px; height: 72px; border-radius: 36px 0 0 36px; background: #fff; box-shadow: 0 8px 40px rgba(0, 0, 0, .14); display: flex; align-items: center; padding-left: 16px; }
.scrollbar { background: #fcfcfc; display: flex; flex-direction: column; align-items: center; padding: 9px 0; }
.thumb { width: 18px; height: 93px; border-radius: 9px; background: #8b8b8b; margin: 861px 0 auto; }

/* Taskbar */
.taskbar { height: 96px; flex: none; background: #10244c; display: flex; align-items: center; }
.widgets { width: 420px; padding-left: 32px; }
.apps { display: flex; }
.app { width: 88px; height: 96px; display: flex; align-items: center; justify-content: center; position: relative; }
.app svg { width: 48px; height: 48px; }
.app.open { background: #23345a; border: solid #10244c; border-width: 8px 4px; border-radius: 14px; }
.dot, .bar { position: absolute; bottom: 10px; width: 12px; height: 6px; border-radius: 3px; background: #9aa1b3; }
.bar { width: 32px; bottom: 2px; background: #60cdff; }
.count { position: absolute; left: 46px; top: 14px; width: 32px; height: 32px; border-radius: 50%; background: #60cdff; color: #000; font-style: normal; font-size: 20px; line-height: 32px; text-align: center; }
.tray { display: flex; align-items: center; color: #fff; }
.chev { margin-left: 44px; }
.cloud { margin-left: 33px; margin-top: 6px; }
.wifi { margin-left: 30px; }
.vol { margin-left: 14px; }
.clock { width: 132px; display: flex; flex-direction: column; align-items: flex-end; font-size: 22.800px; line-height: 32px; white-space: nowrap; letter-spacing: 0.400px; }
.date { letter-spacing: 0.550px; }
.notif { margin-left: 14px; width: 32px; height: 32px; border-radius: 50%; background: #60cdff; color: #000; font-size: 20px; line-height: 32px; text-align: center; }
```
